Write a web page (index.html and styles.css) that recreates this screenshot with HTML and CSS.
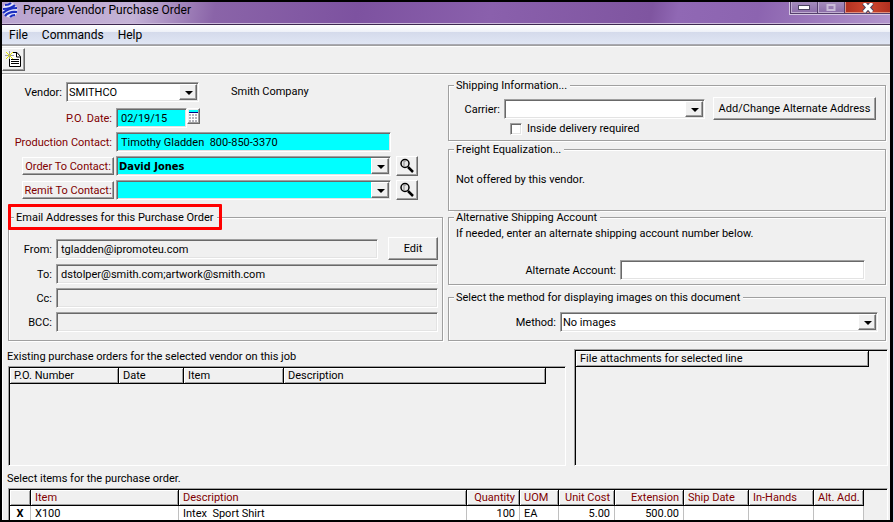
FILE: index.html
```html
<!DOCTYPE html>
<html lang="en">
<head>
    <meta charset="UTF-8">
    <title>Prepare Vendor Purchase Order</title>
    <link rel="stylesheet" href="styles.css">
</head>
<body>
    <div class="window">
        <header class="titlebar">
            <svg class="logo" width="17" height="16" viewBox="0 0 17 16">
                <circle cx="8" cy="8" r="7.500" fill="#e4e4fa"/>
                <g fill="none" stroke="#1c2fc0" stroke-width="2.200">
                    <path d="M3 3q4 0 6-2"/>
                    <path d="M1 7q8 0 12-4"/>
                    <path d="M1 11q5-5 14-5"/>
                    <path d="M3 14q4-5 12-4"/>
                    <path d="M8 15q2-2 5-2"/>
                </g>
            </svg>
            <h1>Prepare Vendor Purchase Order</h1>
            <div class="window-buttons">
                <button class="win-btn" aria-label="Minimize">
                    <svg width="12" height="5" viewBox="0 0 12 5"><rect x=".5" y=".5" width="11" height="4" fill="#fff" stroke="#4c4460"/></svg>
                </button>
                <button class="win-btn" aria-label="Maximize">
                    <svg width="10" height="8" viewBox="0 0 10 8"><rect x="1.5" y="1" width="7" height="5" fill="none" stroke="#c9bbd8" stroke-width="2"/></svg>
                </button>
                <button class="win-btn win-close" aria-label="Close">
                    <svg width="12" height="10" viewBox="0 0 12 10"><path d="M2 0l8 9M10 0L2 9" stroke="#4c4460" stroke-width="5"/><path d="M2 0l8 9M10 0L2 9" stroke="#fff" stroke-width="3"/></svg>
                </button>
            </div>
        </header>

        <nav class="menubar">
            <a href="#">File</a>
            <a href="#">Commands</a>
            <a href="#">Help</a>
        </nav>

        <div class="toolbar">
            <button class="tool-btn" aria-label="New">
                <svg width="17" height="17" viewBox="0 0 17 17">
                    <path d="M4.500 7V15.500H15.500V5.500L12 1.500H8" fill="#fff" stroke="#000"/>
                    <path d="M11.500 1v5h4" fill="none" stroke="#000"/>
                    <path d="M6 8.500h8M6 10.500h8M6 12.500h8" stroke="#000"/>
                    <path d="M4.500 0v8M0 4.500h9" stroke="#9c9c9c"/>
                    <path d="M1 1l7 7M8 1L1 8" stroke="#e8e800"/>
                </svg>
            </button>
        </div>

        <main>
            <form class="columns">
                <div class="col">
                    <div class="row vendor-row">
                        <label for="vendor">Vendor:</label>
                        <span class="combo"><select id="vendor"><option>SMITHCO</option></select></span>
                        <span class="vendor-name">Smith Company</span>
                    </div>
                    <div class="row contact-row">
                        <label for="poDate">P.O. Date:</label>
                        <input type="text" id="poDate" class="required date" value="02/19/15">
                        <button type="button" class="calendar-btn" aria-label="Pick date">
                            <svg width="11" height="13" viewBox="0 0 11 13">
                                <path d="M1 0h9v2H1z" fill="#00ffff"/>
                                <path d="M1 2h9v1H1z" fill="#000080"/>
                                <path d="M1 3h9v9H1z" fill="#fff"/>
                                <path d="M1 5h9M1 8h9M1 11h9" stroke="#b4b4bc" stroke-width="2" stroke-dasharray="2 1"/>
                            </svg>
                        </button>
                    </div>
                    <div class="row contact-row">
                        <label for="production">Production Contact:</label>
                        <input type="text" id="production" class="required wide" value="Timothy Gladden&nbsp; 800-850-3370">
                    </div>
                    <div class="row contact-row">
                        <button type="button" class="label-btn">Order To Contact:</button>
                        <span class="combo required"><select aria-label="Order To Contact" class="bold"><option>David Jones</option></select></span>
                        <button type="button" class="search-btn" aria-label="Search order contacts">
                            <svg width="16" height="16" viewBox="0 0 16 16"><circle cx="6" cy="5.500" r="4" fill="#e6e6e6" stroke="#000" stroke-width="1.500"/><path d="M5 3v5M5 3h2" stroke="#888" fill="none"/><path d="M9 9l5 5" stroke="#000" stroke-width="2.500"/></svg>
                        </button>
                    </div>
                    <div class="row contact-row">
                        <button type="button" class="label-btn">Remit To Contact:</button>
                        <span class="combo required"><select aria-label="Remit To Contact"><option></option></select></span>
                        <button type="button" class="search-btn" aria-label="Search remit contacts">
                            <svg width="16" height="16" viewBox="0 0 16 16"><circle cx="6" cy="5.500" r="4" fill="#e6e6e6" stroke="#000" stroke-width="1.500"/><path d="M5 3v5M5 3h2" stroke="#888" fill="none"/><path d="M9 9l5 5" stroke="#000" stroke-width="2.500"/></svg>
                        </button>
                    </div>

                    <fieldset class="email">
                        <legend class="marked">Email Addresses for this Purchase Order</legend>
                        <div class="row">
                            <label for="from">From:</label>
                            <input type="text" id="from" value="tgladden@ipromoteu.com" readonly>
                            <button type="button" class="btn edit-btn">Edit</button>
                        </div>
                        <div class="row">
                            <label for="to">To:</label>
                            <input type="text" id="to" value="dstolper@smith.com;artwork@smith.com" readonly>
                        </div>
                        <div class="row">
                            <label for="cc">Cc:</label>
                            <input type="text" id="cc" readonly>
                        </div>
                        <div class="row">
                            <label for="bcc">BCC:</label>
                            <input type="text" id="bcc" readonly>
                        </div>
                    </fieldset>
                </div>

                <div class="col">
                    <fieldset class="shipping">
                        <legend>Shipping Information...</legend>
                        <div class="row">
                            <label for="carrier">Carrier:</label>
                            <span class="combo"><select id="carrier"><option></option></select></span>
                            <button type="button" class="btn address-btn">Add/Change Alternate Address</button>
                        </div>
                        <label class="check"><input type="checkbox"> Inside delivery required</label>
                    </fieldset>

                    <fieldset class="freight">
                        <legend>Freight Equalization...</legend>
                        <p>Not offered by this vendor.</p>
                    </fieldset>

                    <fieldset class="account">
                        <legend>Alternative Shipping Account</legend>
                        <p>If needed, enter an alternate shipping account number below.</p>
                        <div class="row">
                            <label for="altAccount">Alternate Account:</label>
                            <input type="text" id="altAccount">
                        </div>
                    </fieldset>

                    <fieldset class="method">
                        <legend>Select the method for displaying images on this document</legend>
                        <div class="row">
                            <label for="method">Method:</label>
                            <span class="combo"><select id="method"><option>No images</option></select></span>
                        </div>
                    </fieldset>
                </div>
            </form>

            <div class="lists">
                <section class="orders">
                    <h2>Existing purchase orders for the selected vendor on this job</h2>
                    <div class="list-box">
                        <table>
                            <colgroup><col class="w-number"><col class="w-date"><col class="w-code"><col class="w-text"></colgroup>
                            <thead>
                                <tr><th>P.O. Number</th><th>Date</th><th>Item</th><th>Description</th></tr>
                            </thead>
                        </table>
                    </div>
                </section>
                <section class="files">
                    <div class="list-box">
                        <table>
                            <colgroup><col class="w-file"></colgroup>
                            <thead>
                                <tr><th>File attachments for selected line</th></tr>
                            </thead>
                        </table>
                    </div>
                </section>
            </div>

            <section class="items">
                <h2>Select items for the purchase order.</h2>
                <div class="list-box">
                    <table>
                        <colgroup>
                            <col class="w-mark"><col class="w-item"><col class="w-desc"><col class="w-qty"><col class="w-uom">
                            <col class="w-cost"><col class="w-ext"><col class="w-ship"><col class="w-ship"><col class="w-alt">
                        </colgroup>
                        <thead>
                            <tr>
                                <th></th>
                                <th>Item</th>
                                <th>Description</th>
                                <th class="num">Quantity</th>
                                <th>UOM</th>
                                <th class="num">Unit Cost</th>
                                <th class="num">Extension</th>
                                <th>Ship Date</th>
                                <th>In-Hands</th>
                                <th>Alt. Add.</th>
                            </tr>
                        </thead>
                        <tbody>
                            <tr>
                                <td class="mark">X</td>
                                <td>X100</td>
                                <td>Intex&nbsp; Sport Shirt</td>
                                <td class="num">100</td>
                                <td>EA</td>
                                <td class="num">5.00</td>
                                <td class="num">500.00</td>
                                <td></td>
                                <td></td>
                                <td></td>
                            </tr>
                        </tbody>
                    </table>
                </div>
            </section>
        </main>
    </div>
</body>
</html>
```
FILE: styles.css
```css
* {
    box-sizing: border-box;
}

body {
    margin: 0;
    padding-right: 1px;
    background: #d9cfe6;
    font-family: Roboto, sans-serif;
    font-size: 11px;
    line-height: 14px;
    color: #000;
}

.window {
    display: flex;
    flex-direction: column;
    height: 100vh;
    overflow: hidden;
    border: 2px solid #000;
    border-right-width: 3px;
    background: #f0f0f0;
}

button, input, select {
    font: inherit;
    color: inherit;
    margin: 0;
    border-radius: 0;
}

button {
    display: flex;
    align-items: center;
    justify-content: center;
    flex: none;
    padding: 0;
    white-space: nowrap;
    background: #f0f0f0;
    border: 1px solid;
    border-color: #fff #696969 #696969 #fff;
    box-shadow: inset -1px -1px 0 #a0a0a0;
}

h2, p {
    margin: 0;
    font-size: 11px;
    font-weight: normal;
}

/* title bar */
.titlebar {
    display: flex;
    flex: none;
    height: 23px;
    background: linear-gradient(100deg, #b9a3cf 0, #c4b2d6 15%, #8a64a8 24%, #7d52a0 40%, #8a60ac 55%, #7f55a0 73%, #9068b4 76%, #8c64b0 85%, #b294cc 100%);
    border-bottom: 1px solid #3d2850;
    box-shadow: inset 0 -1px 0 #cdbcdc;
}

.logo {
    flex: none;
}

.titlebar h1 {
    flex: 1;
    margin: 0 0 0 4px;
    font-size: 12px;
    font-weight: normal;
    line-height: 16px;
}

.window-buttons {
    display: flex;
    height: 13px;
    border: 1px solid #d4c6e2;
    border-width: 0 0 1px 1px;
}

.win-btn {
    width: 27px;
    height: 12px;
    background: linear-gradient(#a58cbc, #8a6ca8);
    border: 1px solid #55406c;
    border-top: 0;
    border-right: 0;
    box-shadow: inset 1px -1px 0 #c0aed0;
}

.win-btn.win-close {
    width: 46px;
    background: linear-gradient(90deg, #b03020, #d04830 50%, #b03020);
    box-shadow: inset 1px -1px 0 #e09080;
}

/* menu and toolbar */
.menubar {
    display: flex;
    flex: none;
    gap: 14px;
    height: 20px;
    padding: 0 7px;
    background: linear-gradient(#fff 0, #eef1f8 35%, #d4daeb 36%, #e0e6f4 100%);
    border-bottom: 1px solid #a8a8b0;
    font-size: 12px;
    line-height: 20px;
}

.menubar a {
    color: #000;
    text-decoration: none;
}

.toolbar {
    flex: none;
    height: 29px;
    padding-top: 3px;
    border-bottom: 1px solid #a0a0a0;
    box-shadow: inset 0 1px 0 #a0a0a0, inset 0 2px 0 #fff;
}

.tool-btn {
    width: 23px;
    height: 23px;
}

main {
    display: flex;
    flex: 1;
    flex-direction: column;
    padding: 8px 2px 0 5px;
    border-left: 1px solid #fff;
    box-shadow: inset 0 1px 0 #fff;
}

/* form */
.columns {
    display: grid;
    grid-template-columns: 435fr 438fr;
    gap: 5px;
    padding-right: 2px;
}

.row {
    display: flex;
    align-items: center;
    gap: 4px;
    margin-bottom: 4px;
}

.row label {
    flex: none;
    padding-top: 2px;
    text-align: right;
    white-space: nowrap;
}

input[type="text"], .combo {
    flex: 1;
    min-width: 0;
    height: 20px;
    padding: 1px 4px 0;
    background: #fff;
    border: 1px solid;
    border-color: #a0a0a0 #fff #fff #a0a0a0;
    box-shadow: inset 1px 1px 0 #696969, inset -1px -1px 0 #e3e3e3;
}

input[type="text"][readonly] {
    background: #f0f0f0;
}

.combo {
    position: relative;
    display: flex;
    padding: 1px;
}

.combo select {
    width: 100%;
    padding: 1px 18px 0 1px;
    appearance: none;
    background: none;
    border: 0;
    outline: 0;
}

/* arrow button */
.combo::before {
    content: "";
    position: absolute;
    top: 1px;
    right: 1px;
    bottom: 1px;
    width: 16px;
    background: #f0f0f0;
    border: 1px solid;
    border-color: #fff #696969 #696969 #fff;
    box-shadow: inset -1px -1px 0 #a0a0a0;
    pointer-events: none;
}

.combo::after {
    content: "";
    position: absolute;
    top: 8px;
    right: 5px;
    border: 4px solid transparent;
    border-top-color: #000;
    border-bottom: 0;
    pointer-events: none;
}

input[type="text"].required, .combo.required {
    background: #00ffff;
}

.combo .bold {
    font-family: "DejaVu Sans Condensed", "DejaVu Sans", sans-serif;
    font-weight: bold;
}

.vendor-row {
    margin-bottom: 6px;
}

.vendor-row label {
    width: 54px;
}

.vendor-row .combo {
    flex: none;
    width: 133px;
}

.vendor-name {
    margin-left: 28px;
}

.contact-row {
    height: 20px;
    color: #800000;
}

.contact-row label {
    width: 104px;
}

.contact-row input, .contact-row select {
    color: #000;
}

.contact-row .combo {
    margin-left: -2px;
}

input[type="text"].date {
    flex: none;
    width: 71px;
}

input[type="text"].wide {
    margin-right: 52px;
}

.calendar-btn {
    align-self: flex-start;
    width: 13px;
    height: 16px;
    margin-left: -4px;
}

.label-btn {
    width: 92px;
    height: 18px;
    margin-left: 14px;
    padding-top: 1px;
}

.search-btn {
    width: 22px;
    height: 20px;
    margin: 0 25px 0 1px;
}

/* group boxes */
fieldset {
    min-width: 0;
    margin: 0;
    padding: 0 7px;
    border: 1px solid #a0a0a0;
    box-shadow: 1px 1px 0 #fff, inset 1px 1px 0 #fff;
}

legend {
    margin-left: -2px;
    padding: 0 3px 0 2px;
    line-height: 13px;
    background: #f0f0f0;
}

.email {
    margin-top: 11px;
    padding: 13px 4px 4px;
}

.email label {
    width: 39px;
}

.edit-btn {
    width: 50px;
    height: 23px;
    margin-left: 6px;
}

.marked {
    position: relative;
    margin-left: 1px;
}

.marked::after {
    content: "";
    position: absolute;
    inset: -7px -5px -6px -6px;
    border: 3px solid #ff0000;
    border-radius: 1px;
}

.columns .col:last-child {
    margin-top: -3px;
}

.shipping {
    padding: 5px 9px 5px 7px;
}

.shipping .row {
    margin-bottom: 3px;
}

.shipping .row label {
    width: 44px;
}

.address-btn {
    width: 163px;
    height: 23px;
    margin-left: 4px;
}

.check {
    display: flex;
    align-items: center;
    gap: 5px;
    height: 12px;
    margin-left: 54px;
}

.check input {
    appearance: none;
    width: 12px;
    height: 12px;
    background: #fff;
    border: 1px solid;
    border-color: #a0a0a0 #fff #fff #a0a0a0;
    box-shadow: inset 1px 1px 0 #696969, inset -1px -1px 0 #e3e3e3;
}

.freight {
    margin-top: 2px;
    padding: 17px 7px 23px;
}

.account {
    padding: 3px 20px 0 7px;
}

.account p {
    margin-bottom: 19px;
}

.account .row label {
    width: 160px;
}

.method {
    margin-top: 6px;
    padding: 8px 7px 4px;
}

.method .row label {
    width: 100px;
}

/* lists */
.lists {
    display: grid;
    grid-template-columns: 558fr 314fr;
    gap: 8px;
    height: 117px;
    margin-top: 8px;
}

.lists section {
    display: flex;
    flex-direction: column;
    min-width: 0;
}

.lists .list-box {
    flex: 1;
}

h2 {
    margin: 0 0 1px -1px;
    line-height: 16px;
}

.list-box {
    border: 1px solid;
    border-color: #a0a0a0 #fff #fff #a0a0a0;
    box-shadow: inset 1px 1px 0 #000;
    padding: 1px 0 0 1px;
}

table {
    table-layout: fixed;
    width: 0;
    border-collapse: separate;
    border-spacing: 0;
}

th {
    height: 16px;
    padding: 0 4px;
    font-weight: normal;
    line-height: 14px;
    text-align: left;
    white-space: nowrap;
    border-right: 1px solid #000;
    border-bottom: 1px solid #000;
    box-shadow: inset 1px 1px 0 #fff, inset -1px -1px 0 #a0a0a0;
}

td {
    height: 16px;
    padding: 0 4px;
    white-space: nowrap;
    background: #fff;
    border-right: 1px solid #c0c0c0;
    border-bottom: 1px solid #c0c0c0;
}

.items {
    margin-top: 5px;
}

.items th {
    color: #800000;
}

.num {
    text-align: right;
}

.mark {
    font-weight: bold;
    text-align: center;
}

.w-number { width: 109px; }
.w-date { width: 65px; }
.w-code { width: 100px; }
.w-text { width: 262px; }
.w-file { width: 293px; }
.w-mark { width: 21px; }
.w-item { width: 148px; }
.w-desc { width: 288px; }
.w-qty { width: 53px; }
.w-uom { width: 39px; }
.w-cost { width: 56px; }
.w-ext { width: 69px; }
.w-ship { width: 65px; }
.w-alt { width: 50px; }
```
